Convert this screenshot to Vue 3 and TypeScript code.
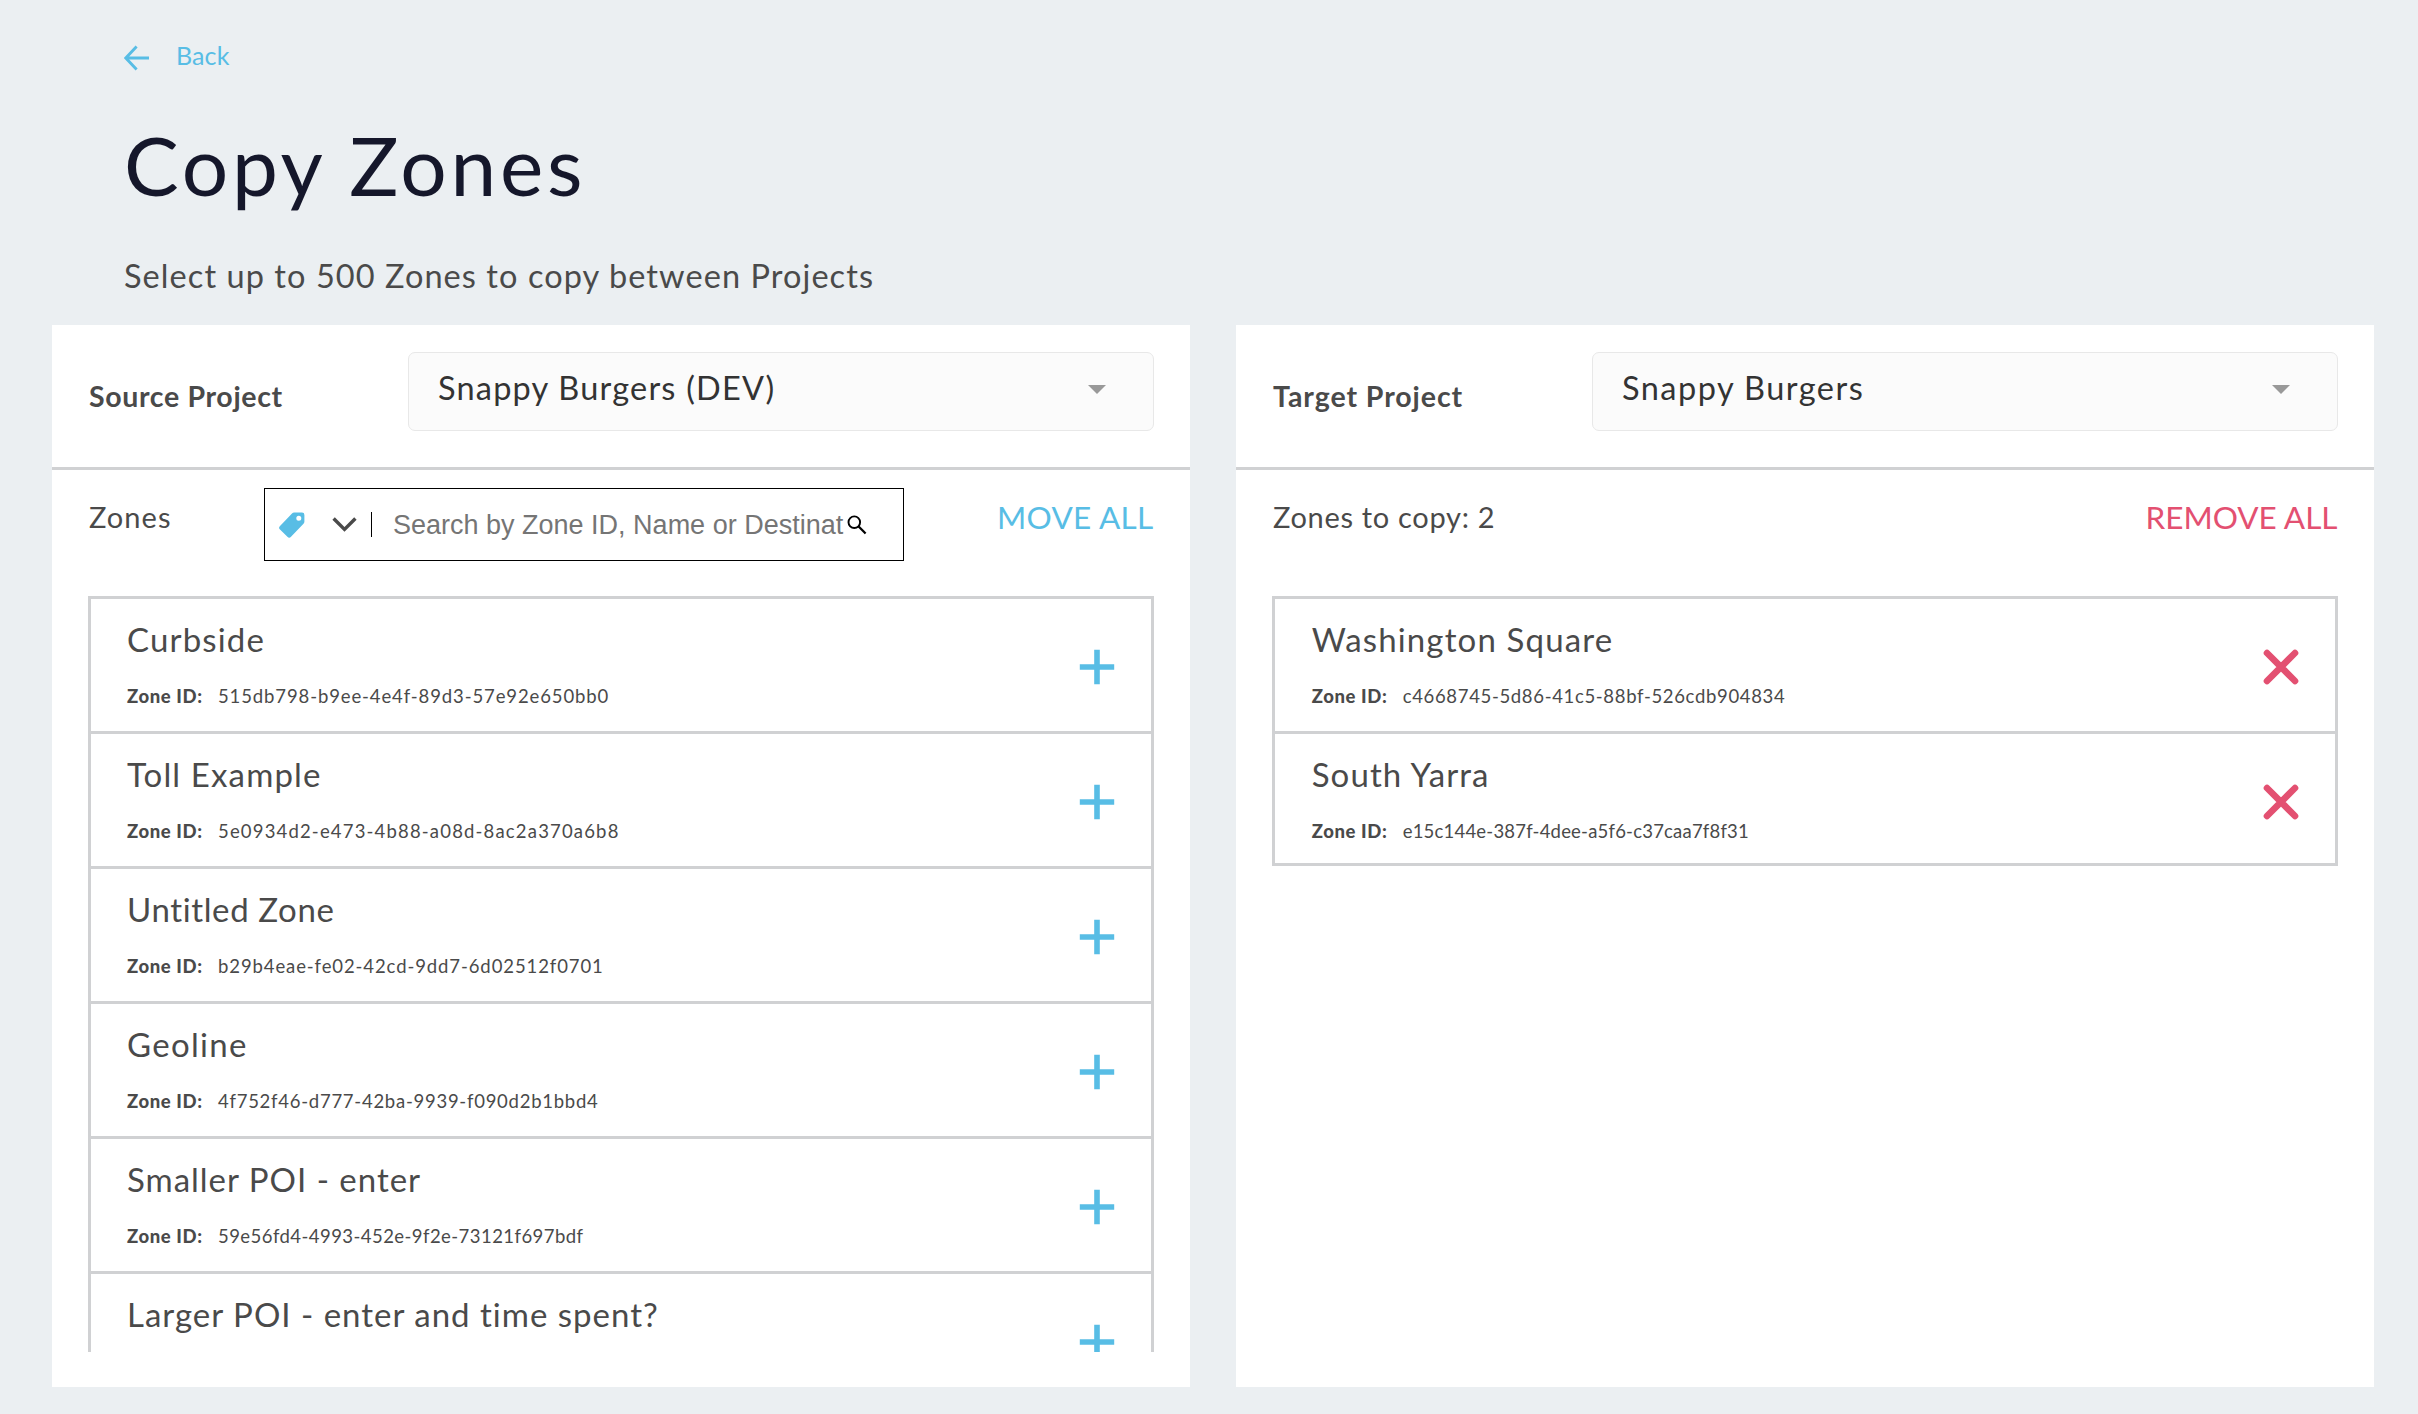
<script setup lang="ts">
interface Zone {
  name: string
  id?: string
  nameTracking: number
  idTracking?: number
}

const sourceZones: Zone[] = [
  { name: 'Curbside', id: '515db798-b9ee-4e4f-89d3-57e92e650bb0', nameTracking: 1.16, idTracking: 0.884 },
  { name: 'Toll Example', id: '5e0934d2-e473-4b88-a08d-8ac2a370a6b8', nameTracking: 1.13, idTracking: 1.17 },
  { name: 'Untitled Zone', id: 'b29b4eae-fe02-42cd-9dd7-6d02512f0701', nameTracking: 0.63, idTracking: 0.896 },
  { name: 'Geoline', id: '4f752f46-d777-42ba-9939-f090d2b1bbd4', nameTracking: 1.3, idTracking: 0.735 },
  { name: 'Smaller POI - enter', id: '59e56fd4-4993-452e-9f2e-73121f697bdf', nameTracking: 0.99, idTracking: 0.441 },
  { name: 'Larger POI - enter and time spent?', nameTracking: 1 },
]

const targetZones: Zone[] = [
  { name: 'Washington Square', id: 'c4668745-5d86-41c5-88bf-526cdb904834', nameTracking: 1.15, idTracking: 0.66 },
  { name: 'South Yarra', id: 'e15c144e-387f-4dee-a5f6-c37caa7f8f31', nameTracking: 1.1, idTracking: 0.2 },
]
</script>

<template>
  <div class="page">
    <header class="head">
      <a class="back">
        <svg class="back-arrow" width="26" height="26" viewBox="0 0 26 26">
          <path d="M25 13H2M12.6 1.6L1.8 13l10.8 11.4" fill="none" stroke="currentColor" stroke-width="2.9" />
        </svg>
        <span>Back</span>
      </a>
      <h1 class="title">Copy Zones</h1>
      <p class="subtitle">Select up to 500 Zones to copy between Projects</p>
    </header>

    <main class="panels">
      <section class="panel">
        <div class="project">
          <span class="project-label source">Source Project</span>
          <div class="select">
            <span class="select-source">Snappy Burgers (DEV)</span>
            <svg class="caret" width="18" height="9" viewBox="0 0 18 9"><path d="M0 0h18L9 9z" fill="#999" /></svg>
          </div>
        </div>
        <div class="toolbar">
          <span class="count zones">Zones</span>
          <div class="search">
            <svg class="tag" width="26" height="26" viewBox="0 0 26 26">
              <path
                fill="#58bde5"
                fill-rule="evenodd"
                d="M15.2 .5H23a2.4 2.4 0 0 1 2.4 2.4V9.6a3.2 3.2 0 0 1-.9 2.2L12 24.8a2.5 2.5 0 0 1-3.6 0L1 17.5a2.5 2.5 0 0 1 0-3.6L13 1.4A3.2 3.2 0 0 1 15.2.5zM19.8 3.7a2.5 2.5 0 1 0 0 5 2.5 2.5 0 0 0 0-5z"
              />
            </svg>
            <svg class="chevron" width="25" height="15" viewBox="0 0 25 15">
              <path d="M1.6 1.5L12.5 12.4 23.4 1.5" fill="none" stroke="#4a4a4a" stroke-width="3.4" />
            </svg>
            <span class="bar"></span>
            <span class="placeholder">Search by Zone ID, Name or Destinat</span>
            <svg class="lens" width="20" height="20" viewBox="0 0 20 20">
              <circle cx="7.3" cy="7.2" r="5.8" fill="none" stroke="#000" stroke-width="1.9" />
              <path d="M11.4 11.3l7.2 7.2" stroke="#000" stroke-width="2.3" />
            </svg>
          </div>
          <a class="action move">MOVE ALL</a>
        </div>
        <div class="viewport">
          <ul class="list">
            <li v-for="zone in sourceZones" :key="zone.name" class="row">
              <div class="info">
                <span class="name" :style="{ letterSpacing: zone.nameTracking + 'px' }">{{ zone.name }}</span>
                <div v-if="zone.id" class="meta">
                  <b class="key">Zone ID:</b>
                  <span :style="{ letterSpacing: zone.idTracking + 'px' }">{{ zone.id }}</span>
                </div>
              </div>
              <svg class="mark" width="36" height="36" viewBox="0 0 36 36">
                <path d="M18 .8v34.4M.8 18h34.4" stroke="#58bde5" stroke-width="5.6" />
              </svg>
            </li>
          </ul>
        </div>
      </section>

      <section class="panel">
        <div class="project">
          <span class="project-label target">Target Project</span>
          <div class="select">
            <span class="select-target">Snappy Burgers</span>
            <svg class="caret" width="18" height="9" viewBox="0 0 18 9"><path d="M0 0h18L9 9z" fill="#999" /></svg>
          </div>
        </div>
        <div class="toolbar">
          <span class="count">Zones to copy: 2</span>
          <a class="action remove">REMOVE ALL</a>
        </div>
        <div class="viewport">
          <ul class="list target-list">
            <li v-for="zone in targetZones" :key="zone.name" class="row">
              <div class="info">
                <span class="name" :style="{ letterSpacing: zone.nameTracking + 'px' }">{{ zone.name }}</span>
                <div v-if="zone.id" class="meta">
                  <b class="key">Zone ID:</b>
                  <span :style="{ letterSpacing: zone.idTracking + 'px' }">{{ zone.id }}</span>
                </div>
              </div>
              <svg class="mark" width="36" height="36" viewBox="0 0 36 36">
                <path d="M4 4l28 28M32 4L4 32" stroke="#e35071" stroke-width="6.6" stroke-linecap="round" />
              </svg>
            </li>
          </ul>
        </div>
      </section>
    </main>
  </div>
</template>

<style>
body {
  background: #ebeff2;
}
</style>

<style scoped>
.page {
  box-sizing: border-box;
  width: 2418px;
  height: 1414px;
  padding: 39px 44px 0 52px;
  overflow: hidden;
  background: #ebeff2;
  color: #4a4a4a;
  font-family: Lato, sans-serif;
  white-space: nowrap;
}
.head {
  height: 286px;
  padding-left: 72px;
}
.back {
  display: flex;
  align-items: flex-start;
  gap: 26px;
  height: 30px;
  font-size: 25px;
  line-height: 32px;
  letter-spacing: 0.1px;
  color: #58bde5;
}
.back-arrow {
  margin-top: 6px;
}
.title {
  margin: 45px 0 0;
  font-size: 82px;
  font-weight: 400;
  line-height: 100px;
  letter-spacing: 3.72px;
  color: #15172b;
}
.subtitle {
  margin: 42px 0 0;
  font-size: 32.5px;
  line-height: 40px;
  letter-spacing: 1.07px;
}
.panels {
  display: flex;
  gap: 46px;
}
.panel {
  width: 1138px;
  height: 1062px;
  background: #fff;
}
.project {
  box-sizing: border-box;
  display: flex;
  justify-content: space-between;
  align-items: flex-start;
  height: 145px;
  padding: 27px 36px 0 37px;
  border-bottom: 3px solid #d0d1d3;
}
.project-label {
  margin-top: 24px;
  font-size: 28.5px;
  font-weight: 700;
  line-height: 40px;
}
.source {
  letter-spacing: 0.65px;
}
.target {
  letter-spacing: 0.93px;
}
.select {
  box-sizing: border-box;
  display: flex;
  justify-content: space-between;
  width: 746px;
  height: 79px;
  padding: 15px 47px 0 29px;
  border: 1px solid #e8e8e8;
  border-radius: 7px;
  background: #fbfbfb;
  color: #333;
  font-size: 32.5px;
  line-height: 40px;
}
.select-source {
  letter-spacing: 1.21px;
}
.select-target {
  letter-spacing: 1.467px;
}
.caret {
  margin-top: 17px;
}
.toolbar {
  display: flex;
  align-items: flex-start;
  height: 126px;
  padding: 0 36.5px 0 37px;
}
.count {
  margin-top: 27px;
  font-size: 29px;
  line-height: 40px;
  letter-spacing: 0.69px;
}
.zones {
  width: 175px;
  letter-spacing: 1.075px;
}
.search {
  box-sizing: border-box;
  display: flex;
  align-items: center;
  width: 640px;
  height: 73px;
  margin-top: 18px;
  padding-left: 14px;
  border: 1px solid #000;
}
.chevron {
  margin-left: 27px;
}
.bar {
  width: 1px;
  height: 25px;
  margin-left: 14px;
  background: #000;
}
.placeholder {
  width: 453px;
  margin-left: 21px;
  padding-top: 2px;
  font-family: "Liberation Sans", sans-serif;
  font-size: 27px;
  color: #757575;
}
.lens {
  margin-left: 1px;
}
.action {
  margin: 27px 0 0 auto;
  font-size: 31.5px;
  line-height: 40px;
}
.move {
  color: #58bde5;
  letter-spacing: 0.306px;
}
.remove {
  color: #e35071;
  letter-spacing: 0;
}
.viewport {
  height: 756px;
  padding: 0 36px;
  overflow: hidden;
}
.list {
  margin: 0;
  padding: 0;
  border: 3px solid #d0d1d3;
  list-style: none;
}
.row {
  box-sizing: border-box;
  display: flex;
  justify-content: space-between;
  height: 135px;
  padding: 20px 36px 0;
  border-bottom: 3px solid #d0d1d3;
}
.row:last-child {
  height: 129px;
  border-bottom: 0;
}
.target-list .info {
  margin-left: 0.7px;
}
.name {
  display: block;
  font-size: 33px;
  line-height: 40px;
}
.meta {
  display: flex;
  margin-top: 24.5px;
  font-size: 18.5px;
  line-height: 24px;
}
.key {
  width: 91px;
  font-weight: 900;
  letter-spacing: 0.6px;
}
.mark {
  margin-top: 30px;
}
</style>
